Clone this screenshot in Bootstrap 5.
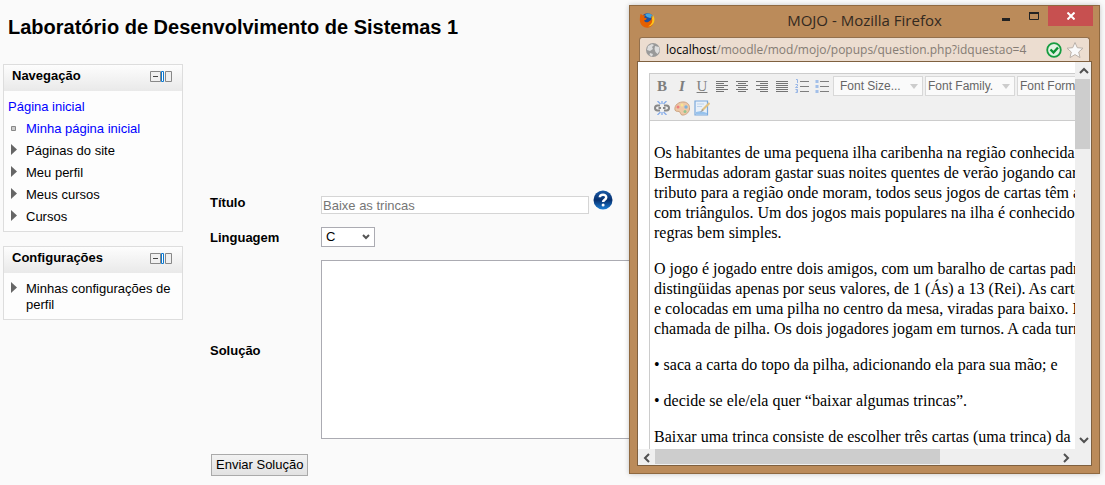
<!DOCTYPE html>
<html lang="pt-BR">
<head>
<meta charset="utf-8">
<meta name="viewport" content="width=device-width, initial-scale=1">
<title>Laboratório de Desenvolvimento de Sistemas 1</title>
<link href="https://cdn.jsdelivr.net/npm/bootstrap@5.3.0/dist/css/bootstrap.min.css" rel="stylesheet">
<style>
body { background: #fafafa; color: #000; font: 13px/16px "Liberation Sans", Arial, sans-serif; min-height: 100vh; overflow: hidden; }
h1 { font-size: 20px; line-height: 24px; font-weight: 700; padding: 15px 8px 0; margin: 0 0 25px; }
a { color: #0000ff; text-decoration: none; }
svg { display: block; flex: none; }

.side { width: 180px; margin-left: 3px; gap: 14px; }
.block { border: 1px solid #ddd; background: #fdfdfd; }
.block-head { background: linear-gradient(#fdfdfd, #e9e9e9); height: 26px; padding: 0 10px 4px 8px; }
.block h2 { font-size: 13px; line-height: 16px; font-weight: 700; margin: 0; }
.block-body { padding: 5px 4px 3px; }
.tree { padding: 3px 0; }
.tree > span, .tree > svg { width: 18px; }
.tree.leafless svg { margin-top: 1px; }
.tool { border: 0; background: none; padding: 0; }

.work { margin-left: 27px; padding-top: 126px; }
.work label { width: 111px; font-weight: 700; flex: none; padding-top: 2px; }
.work .form-control, .work .form-select { border-radius: 0; font-size: 13px; line-height: 16px; color: #000; border: 1px solid #ababb2; background-color: #fff; }
.work .title-box { width: 268px; height: 18px; padding: 0 1px; border-color: #d5d5d5; color: #767676; }
.work .title-box:disabled { background-color: #fff; }
.work .lang-box { width: 54px; height: 20px; padding: 0 4px; background-image: url("data:image/svg+xml,%3Csvg xmlns='http://www.w3.org/2000/svg' width='8' height='6'%3E%3Cpath d='M1 1l3 3 3-3' fill='none' stroke='%23555' stroke-width='2'/%3E%3C/svg%3E"); background-size: 8px 6px; background-position: right 4px center; }
.work .code-box { height: 179px; max-width: 600px; resize: none; }
.row-title { height: 24px; }
.row-gap { margin-top: 13px; }
.send { margin-top: 15px; margin-left: 1px; border: 1px solid #aaa; border-radius: 0; background: linear-gradient(#f2f2f2, #e2e2e2); color: #000; font-size: 13px; line-height: 16px; padding: 2px 4px; }

.popup { position: absolute; top: 5px; right: 5px; width: 471px; height: 469px; padding: 0 7px 7px; background: #bb8b5a; border: 1px solid #8f6940; box-shadow: 0 0 5px rgba(0,0,0,.22); }
.caption { height: 31px; font: 15px/20px "Open Sans", sans-serif; color: #33291f; }
.caption .fox { position: absolute; left: 9px; top: 6px; }
.caption .words { padding-top: 4px; }
.caption .winbtns { position: absolute; top: 0; right: 6px; }
.winbtns button { border: 0; background: none; padding: 0; height: 20px; display: flex; align-items: center; justify-content: center; width: 28px; }
.winbtns .shut { width: 45px; background: #c75050; }
.address { height: 24px; margin: 0 2px; padding: 0 5px; background: #ecddd0; border: 1px solid #93704d; border-bottom: 0; border-radius: 3px 3px 0 0; }
.address .url { font: 12px/18px "Open Sans", sans-serif; color: #857c74; margin-left: 5px; }
.address b { font-weight: 400; color: #000; }
.pane { border: 1px solid #7f603f; background: #efefef; display: grid; grid-template: minmax(0, 1fr) 16px / minmax(0, 1fr) 16px; flex: 1 1 0; min-height: 0; }
.view { background: #fff; overflow: hidden; padding: 11px 0 0 11px; }
.editor { width: 640px; border: 1px solid #ccc; }
.editbar { height: 47px; background: #f0f0f0; border-bottom: 1px solid #ccc; padding: 2px; }
.editbar button { width: 20px; height: 20px; border: 0; background: none; padding: 0; display: grid; place-items: center; opacity: .6; }
.editbar .letter { font: 700 15px/20px "Liberation Serif", serif; color: #333; }
.editbar select { height: 20px; width: 90px; margin-right: 2px; padding: 0 2px; border: 1px solid #d8d8d8; color: #666; font-size: 12px; line-height: 16px; appearance: none; border-radius: 0; background: #fafafa url("data:image/svg+xml,%3Csvg xmlns='http://www.w3.org/2000/svg' width='8' height='5'%3E%3Cpath d='M0 0h8L4 5z' fill='%23ccc'/%3E%3C/svg%3E") no-repeat right 4px center; }
.editbar .sizes { padding-left: 6px; margin-left: 1px; }
.editbar .second { padding-top: 2px; }
.prose { font: 16px/20px "Liberation Serif", "Times New Roman", serif; padding: 22px 4px 0; white-space: nowrap; }
.prose p { margin: 0 0 16px; }
.vbar .thumb { width: 15px; height: 70px; background: #cdcdcd; }
.hbar .thumb { width: 285px; height: 15px; background: #cdcdcd; }
.arrow { width: 17px; height: 17px; display: grid; place-items: center; }
</style>
</head>
<body>
<h1>Laboratório de Desenvolvimento de Sistemas 1</h1>

<div class="d-flex align-items-start">
  <aside class="side d-flex flex-column flex-shrink-0">
    <section class="block">
      <div class="block-head d-flex align-items-center justify-content-between">
        <h2>Navegação</h2>
        <button class="tool" aria-label="Recolher bloco"><svg width="22" height="11"><path d="M.5.5h10v10H.5zM15.500.5h6v10h-6z" fill="#f0f0f0" stroke="#888"/><path d="M3 5.500h5" stroke="#444"/><path d="M11.500.5h2v10h-2z" fill="#fff" stroke="#0b78d0"/></svg></button>
      </div>
      <nav class="block-body">
        <div class="tree"><a href="#">Página inicial</a></div>
        <div class="tree d-flex"><span class="d-flex align-items-center"><svg width="10" height="6"><path d="M3.500.5h4v4h-4z" fill="#ccc" stroke="#888"/></svg></span><a href="#">Minha página inicial</a></div>
        <div class="tree leafless d-flex"><svg height="12"><path d="M3 0l6 5.500L3 11z" fill="#666"/></svg>Páginas do site</div>
        <div class="tree leafless d-flex"><svg height="12"><path d="M3 0l6 5.500L3 11z" fill="#666"/></svg>Meu perfil</div>
        <div class="tree leafless d-flex"><svg height="12"><path d="M3 0l6 5.500L3 11z" fill="#666"/></svg>Meus cursos</div>
        <div class="tree leafless d-flex"><svg height="12"><path d="M3 0l6 5.500L3 11z" fill="#666"/></svg>Cursos</div>
      </nav>
    </section>
    <section class="block">
      <div class="block-head d-flex align-items-center justify-content-between">
        <h2>Configurações</h2>
        <button class="tool" aria-label="Recolher bloco"><svg width="22" height="11"><path d="M.5.5h10v10H.5zM15.500.5h6v10h-6z" fill="#f0f0f0" stroke="#888"/><path d="M3 5.500h5" stroke="#444"/><path d="M11.500.5h2v10h-2z" fill="#fff" stroke="#0b78d0"/></svg></button>
      </div>
      <nav class="block-body">
        <div class="tree leafless d-flex"><svg height="12"><path d="M3 0l6 5.500L3 11z" fill="#666"/></svg><span class="w-auto">Minhas configurações de perfil</span></div>
      </nav>
    </section>
  </aside>

  <form class="work flex-grow-1">
    <div class="row-title d-flex align-items-center">
      <label for="titulo">Título</label>
      <input id="titulo" class="form-control title-box align-self-end" type="text" value="Baixe as trincas" disabled>
      <button type="button" class="tool ms-1 align-self-start" aria-label="Ajuda"><svg width="20" height="20" viewBox="0 0 20 20"><defs><linearGradient id="q" x2="0" y2="1"><stop stop-color="#1a5ba8"/><stop offset=".5" stop-color="#06306f"/><stop offset="1" stop-color="#1c7fd6"/></linearGradient></defs><circle cx="10" cy="10" r="9.500" fill="url(#q)"/><path d="M6.800 7.300C7 3.800 13.300 3.800 13.200 7.400c0 2.200-3.100 2.300-3.100 4.600" fill="none" stroke="#fff" stroke-width="2.500"/><circle cx="10.100" cy="15" r="1.500" fill="#fff"/></svg></button>
    </div>
    <div class="row-gap d-flex align-items-center">
      <label for="ling">Linguagem</label>
      <select id="ling" class="form-select lang-box"><option>C</option></select>
    </div>
    <div class="row-gap d-flex align-items-center">
      <label for="sol">Solução</label>
      <textarea id="sol" class="form-control code-box"></textarea>
    </div>
    <button type="button" class="btn send">Enviar Solução</button>
  </form>
</div>

<div class="popup d-flex flex-column" role="dialog" aria-label="MOJO - Mozilla Firefox">
  <div class="caption">
    <svg class="fox" width="16" height="16" viewBox="0 0 16 16"><circle cx="8.500" cy="7.500" r="6.300" fill="#1d4f9e"/><path d="M6 3c3-3 7-1 8 2l-3 1-3-1z" fill="#42a5df"/><path d="M1.500 2c.8.3 1.500.8 2 1.500 1-.4 2-.3 2.700 0L5 5.500l2.800.8-.8 1.400-2 .7c1 2.500 4.200 2 5.500.5 1.800-.4 2.500-2.500 1.500-5.400C15.500 6 15.500 12 12 14.500 7.500 17.500 1.300 14.500.9 8.800.7 6 1 4 1.500 2z" fill="#e66000"/><path d="M14 3c2 3 2 7-.5 9.500-1.300 1.500-3 1.900-4.500 1.800 3-1.300 5-4 4-8z" fill="#ffc51b"/></svg>
    <div class="words text-center">MOJO - Mozilla Firefox</div>
    <div class="winbtns d-flex">
      <button aria-label="Minimizar"><svg width="8" height="14"><path d="M0 10.500h8" stroke="#222" stroke-width="3"/></svg></button>
      <button aria-label="Maximizar"><svg width="10" height="8"><path d="M.5 1v6.500h9V1" fill="none" stroke="#222"/><path d="M0 1h10" stroke="#222" stroke-width="2"/></svg></button>
      <button class="shut" aria-label="Fechar"><svg width="8" height="8"><path d="M.5.5l7 7m0-7l-7 7" stroke="#fff" stroke-width="2"/></svg></button>
    </div>
  </div>
  <div class="address d-flex align-items-center">
    <svg width="16" height="16" viewBox="0 0 16 16"><circle cx="8" cy="8" r="7" fill="#999"/><path d="M3 4l4-2 2 1-2 2 1 2-3 2-3-1zM10 4l4 1 .5 4-2 3-2-2-1-3zM5 11l3 1-1 2.500L4.500 13z" fill="#ddd"/></svg>
    <span class="url flex-grow-1"><b>localhost</b>/moodle/mod/mojo/popups/question.php?idquestao=4</span>
    <svg width="16" height="16" viewBox="0 0 16 16"><circle cx="8" cy="8" r="6.800" fill="#e3f2e3" stroke="#159c40" stroke-width="1.800"/><path d="M4.500 7.500l3 3 4.500-5" fill="none" stroke="#0c9235" stroke-width="2.400"/></svg>
    <svg class="ms-1" width="18" height="18" viewBox="0 0 18 18"><path d="M9 1.500l2.300 5.200 5.700.5-4.300 3.800 1.300 5.600-5-3-5 3 1.300-5.600L1 7.200l5.700-.5z" fill="#fafafa" stroke="#bbb2aa"/></svg>
  </div>
  <div class="pane">
    <div class="view">
      <div class="editor">
        <div class="editbar">
          <div class="d-flex">
            <button class="letter" aria-label="Negrito">B</button>
            <button class="letter fst-italic" aria-label="Itálico">I</button>
            <button class="letter fw-normal text-decoration-underline" aria-label="Sublinhado">U</button>
            <button aria-label="Alinhar à esquerda"><svg width="12" height="12"><path d="M0 1.500h12M0 3.500h8M0 5.500h12M0 7.500h8M0 9.500h12M0 11.500h8" stroke="#222"/></svg></button>
            <button aria-label="Centralizar"><svg width="12" height="12"><path d="M0 1.500h12M2 3.500h8M0 5.500h12M2 7.500h8M0 9.500h12M2 11.500h8" stroke="#222"/></svg></button>
            <button aria-label="Alinhar à direita"><svg width="12" height="12"><path d="M0 1.500h12M4 3.500h8M0 5.500h12M4 7.500h8M0 9.500h12M4 11.500h8" stroke="#222"/></svg></button>
            <button aria-label="Justificar"><svg width="12" height="12"><path d="M0 1.500h12M0 3.500h12M0 5.500h12M0 7.500h12M0 9.500h12M0 11.500h12" stroke="#222"/></svg></button>
            <button aria-label="Lista numerada"><svg width="14" height="14"><path d="M5 2.500h9M5 7.500h9M5 12.500h9" stroke="#333"/><path d="M1 .5h1.500V4M.5 5.500h2v1.500l-2 1.500h2.500M.5 10.500h2v3h-2M1 12h1.500" fill="none" stroke="#5d8fe0"/></svg></button>
            <button aria-label="Lista com marcadores"><svg width="14" height="14"><path d="M5 2.500h9M5 7.500h9M5 12.500h9" stroke="#333"/><path d="M.5 1h3v3h-3zM.5 6h3v3h-3zM.5 11h3v3h-3z" fill="#6f9fe6"/></svg></button>
            <select class="sizes" aria-label="Tamanho da fonte"><option>Font Size...</option></select>
            <select aria-label="Família da fonte"><option>Font Family.</option></select>
            <select aria-label="Formato da fonte"><option>Font Format</option></select>
          </div>
          <div class="second d-flex">
            <button aria-label="Link"><svg width="16" height="14" viewBox="0 0 16 14"><path d="M6 4.500H3.500a2.500 2.500 0 000 5H6M10 4.500h2.500a2.500 2.500 0 010 5H10M4.500 7h2.500m2 0h2.500" fill="none" stroke="#444" stroke-width="2"/><path d="M3.500 0l3 3M8 0v3M12.500 0l-3 3M3.500 14l3-3M8 14v-3M12.500 14l-3-3" stroke="#3f7fe8" stroke-width="1.300"/></svg></button>
            <button aria-label="Cores"><svg width="16" height="15" viewBox="0 0 16 15"><path d="M1 9C0 4 5 .5 10 1c4 .4 6 3.500 5.500 7-.5 4-4.500 6.500-7.500 6-2-.4-1-3-3-3.500C3.500 10 2 11 1 9z" fill="#eeb077" stroke="#b5713a"/><circle cx="4" cy="6" r="1.500" fill="#e33"/><circle cx="8" cy="4" r="1.500" fill="#fd5"/><circle cx="12" cy="6" r="1.700" fill="#38c"/><circle cx="11" cy="10.500" r="1.500" fill="#5a5"/></svg></button>
            <button aria-label="Editar"><svg width="16" height="16" viewBox="0 0 16 16"><path d="M1 1h12.500v14H1z" fill="#e4f1ff" stroke="#2d7bd0" stroke-width="1.200"/><path d="M3 4h7M3 6.500h5" stroke="#9cc1ea"/><path d="M2 14.500V12l5-1 6 2v1.500z" fill="#5ca4ec"/><path d="M15.500 3L8 10.500" stroke="#d9a43a" stroke-width="2.200"/><path d="M8.500 9l-2.500 3.500 3.500-2z" fill="#666"/></svg></button>
          </div>
        </div>
        <div class="prose">
          <p>Os habitantes de uma pequena ilha caribenha na região conhecida como<br>Bermudas adoram gastar suas noites quentes de verão jogando cartas. Como<br>tributo para a região onde moram, todos seus jogos de cartas têm algo<br>com triângulos. Um dos jogos mais populares na ilha é conhecido e tem<br>regras bem simples.</p>
          <p>O jogo é jogado entre dois amigos, com um baralho de cartas padrão<br>distingüidas apenas por seus valores, de 1 (Ás) a 13 (Rei). As cartas<br>e colocadas em uma pilha no centro da mesa, viradas para baixo. Esta<br>chamada de pilha. Os dois jogadores jogam em turnos. A cada turno</p>
          <p>• saca a carta do topo da pilha, adicionando ela para sua mão; e</p>
          <p>• decide se ele/ela quer “baixar algumas trincas”.</p>
          <p>Baixar uma trinca consiste de escolher três cartas (uma trinca) da</p>
        </div>
      </div>
    </div>
    <div class="vbar d-flex flex-column">
      <span class="arrow"><svg width="10" height="7"><path d="M1 6l4-4 4 4" fill="none" stroke="#505050" stroke-width="2"/></svg></span>
      <div class="thumb"></div>
      <span class="arrow mt-auto"><svg width="10" height="7"><path d="M1 1l4 4 4-4" fill="none" stroke="#505050" stroke-width="2"/></svg></span>
    </div>
    <div class="hbar d-flex">
      <span class="arrow"><svg width="7" height="10"><path d="M6 1L2 5l4 4" fill="none" stroke="#505050" stroke-width="2"/></svg></span>
      <div class="thumb"></div>
      <span class="arrow ms-auto"><svg width="7" height="10"><path d="M1 1l4 4-4 4" fill="none" stroke="#505050" stroke-width="2"/></svg></span>
    </div>
  </div>
</div>
<script src="https://cdn.jsdelivr.net/npm/bootstrap@5.3.0/dist/js/bootstrap.bundle.min.js"></script>
</body>
</html>
